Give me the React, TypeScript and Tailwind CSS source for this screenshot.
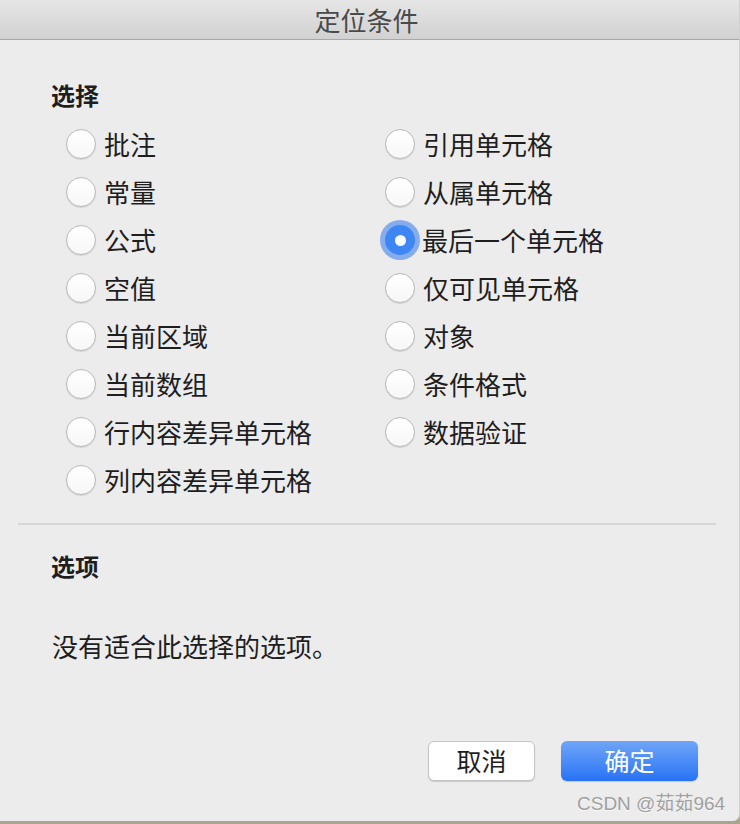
import React from "react";

const left = ["批注", "常量", "公式", "空值", "当前区域", "当前数组", "行内容差异单元格", "列内容差异单元格"];
const right = ["引用单元格", "从属单元格", "最后一个单元格", "仅可见单元格", "对象", "条件格式", "数据验证"];

function Radio({ checked }: { checked?: boolean }) {
  if (checked) {
    return (
      <div className="w-[30px] h-[30px] rounded-full bg-[#3f86f5] flex items-center justify-center shadow-[0_0_0_5px_rgba(90,145,238,0.7)] shrink-0">
        <div className="w-[11px] h-[11px] rounded-full bg-white" />
      </div>
    );
  }
  return (
    <div className="w-[30px] h-[30px] rounded-full bg-gradient-to-b from-[#ffffff] to-[#f7f7f7] border border-[#b9b9b9] shadow-[0_1px_1px_rgba(0,0,0,0.12)] shrink-0" />
  );
}

function Item({ label, checked }: { label: string; checked?: boolean }) {
  return (
    <div className="h-[48px] flex items-center">
      <Radio checked={checked} />
      <span className={checked ? "ml-[7px] mb-[1px] text-[26px] text-[#1e1e1e] leading-none" : "ml-[8px] mb-[1px] text-[26px] text-[#1e1e1e] leading-none"}>{label}</span>
    </div>
  );
}

export default function App() {
  return (
    <div
      className="w-[740px] h-[824px] bg-[#a9a58e] relative overflow-hidden"
      style={{ fontFamily: '"Noto Sans CJK SC", "Noto Sans", sans-serif' }}
    >
      <div className="w-[740px] h-[821px] bg-[#ececec] rounded-br-[7px] flex flex-col border-r border-[#d0d0d0]">
        <div className="h-[40px] bg-gradient-to-b from-[#e6e6e6] to-[#d1d1d1] border-b border-[#a8a8a8] flex items-center justify-center shrink-0">
          <span className="text-[26px] text-[#4a4a4a] leading-none mr-[6px]">定位条件</span>
        </div>
        <div className="pl-[51px] mt-[39px] h-[32px] flex items-center text-[24px] font-bold text-[#1e1e1e] leading-none">选择</div>
        <div className="mt-[9px] pl-[66px] flex">
          <div className="w-[319px] flex flex-col">
            {left.map((l) => (
              <Item key={l} label={l} />
            ))}
          </div>
          <div className="flex flex-col">
            {right.map((l) => (
              <Item key={l} label={l} checked={l === "最后一个单元格"} />
            ))}
          </div>
        </div>
        <div className="mt-[19px] ml-[18px] w-[698px] h-[2px] bg-[#d6d6d6]" />
        <div className="pl-[51px] mt-[25px] h-[32px] flex items-center text-[24px] font-bold text-[#1e1e1e] leading-none">选项</div>
        <div className="pl-[52px] mt-[48px] h-[32px] flex items-center text-[26px] text-[#1e1e1e] leading-none">没有适合此选择的选项。</div>
        <div className="mt-[79px] flex pl-[428px] gap-[26px]">
          <div className="w-[107px] h-[40px] rounded-[6px] bg-white border border-[#c4c4c4] shadow-[0_1px_1px_rgba(0,0,0,0.15)] flex items-center justify-center text-[25px] text-[#1e1e1e]">
            取消
          </div>
          <div className="w-[137px] h-[40px] rounded-[6px] bg-gradient-to-b from-[#6fa5f7] to-[#2672f5] shadow-[0_1px_1px_rgba(0,0,0,0.15)] flex items-center justify-center text-[25px] text-white">
            确定
          </div>
        </div>
      </div>
      <div
        className="absolute left-[577px] top-[791px] text-[19px] text-[#a0a0a0] leading-[26px] [text-shadow:0_1px_0_rgba(255,255,255,0.8)]"
        style={{ fontFamily: '"Liberation Sans", "Noto Sans CJK SC", sans-serif' }}
      >
        CSDN @茹茹964
      </div>
    </div>
  );
}
